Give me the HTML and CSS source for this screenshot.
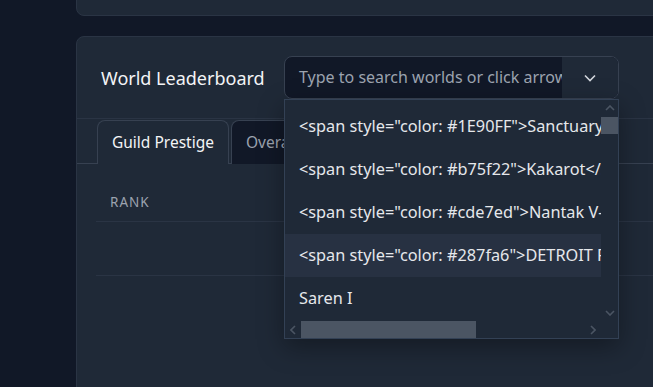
FILE: index.html
```html
<!DOCTYPE html>
<html lang="en">
  <head>
    <meta charset="UTF-8" />
    <meta name="viewport" content="width=device-width, initial-scale=1.0" />
    <title>World Leaderboard</title>
    <link rel="stylesheet" href="styles.css">
  </head>
  <body>
    <div class="page">
      <div class="card summary-card"></div>

      <div class="card board-card">
        <div class="board-header">
          <h2 class="board-title">World Leaderboard</h2>
          <div class="search">
            <div class="search-box">
              <span class="search-placeholder">Type to search worlds or click arrow</span>
              <span class="search-toggle">
                <svg width="12" height="8" viewBox="0 0 12 8">
                  <path d="M1 1.5 L6 6.5 L11 1.5" fill="none" stroke="#d1d5db" stroke-width="1.6" />
                </svg>
              </span>
            </div>
            <!-- Dropdown list with scrollbars -->
            <div class="dropdown">
              <div class="dropdown-list">
                <div class="option">&lt;span style="color: #1E90FF"&gt;Sanctuary&lt;/span&gt;</div>
                <div class="option">&lt;span style="color: #b75f22"&gt;Kakarot&lt;/span&gt;</div>
                <div class="option">&lt;span style="color: #cde7ed"&gt;Nantak V-II&lt;/span&gt;</div>
                <div class="option option-hover">&lt;span style="color: #287fa6"&gt;DETROIT RP&lt;/span&gt;</div>
                <div class="option">Saren I</div>
              </div>
              <div class="vscroll">
                <svg class="arrow arrow-up" width="10" height="6" viewBox="0 0 10 6">
                  <path d="M1 5 L5 1 L9 5" fill="none" stroke="#4b5563" stroke-width="1.6" />
                </svg>
                <span class="vthumb"></span>
                <svg class="arrow arrow-down" width="10" height="6" viewBox="0 0 10 6">
                  <path d="M1 1 L5 5 L9 1" fill="none" stroke="#4b5563" stroke-width="1.6" />
                </svg>
              </div>
              <div class="hscroll">
                <svg class="arrow arrow-left" width="6" height="10" viewBox="0 0 6 10">
                  <path d="M5 1 L1 5 L5 9" fill="none" stroke="#4b5563" stroke-width="1.6" />
                </svg>
                <span class="hthumb"></span>
                <svg class="arrow arrow-right" width="6" height="10" viewBox="0 0 6 10">
                  <path d="M1 1 L5 5 L1 9" fill="none" stroke="#4b5563" stroke-width="1.6" />
                </svg>
              </div>
              <div class="scroll-corner"></div>
            </div>
          </div>
        </div>

        <div class="tabs">
          <div class="tab tab-active">Guild Prestige</div>
          <div class="tab">Overall Prestige</div>
        </div>

        <table class="board-table">
          <thead>
            <tr><th class="col-rank">Rank</th><th>Guild</th><th>Prestige</th></tr>
          </thead>
          <tbody>
            <tr><td></td><td></td><td></td></tr>
          </tbody>
        </table>
      </div>
    </div>
  </body>
</html>
```

FILE: styles.css
```css
* {
  box-sizing: border-box;
}
body {
  margin: 0;
  height: 387px;
  overflow: hidden;
  background-color: #111827;
  color: #e5e7eb;
  font-family: "Noto Sans", "Open Sans", sans-serif;
}
.page {
  display: flex;
  flex-direction: column;
  gap: 20px;
  padding-left: 76px;
  margin-top: -40px;
  width: 720px;
}
.card {
  background-color: #1f2937;
  border: 1px solid #2a3444;
  border-radius: 8px;
}
.summary-card {
  height: 56px;
}
.board-card {
  height: 420px;
}
.board-header {
  display: flex;
  align-items: center;
  padding: 19px 24px 19px 24px;
  border-bottom: 1px solid #2a3444;
}
.board-title {
  width: 183px;
  margin: 0;
  font-size: 18px;
  font-weight: 400;
  color: #f3f4f6;
}
.search {
  position: relative;
  width: 335px;
}
.search-box {
  display: flex;
  height: 43px;
  background-color: #111827;
  border: 1px solid #374151;
  border-radius: 8px;
  overflow: hidden;
}
.search-placeholder {
  flex: 1;
  padding-left: 14px;
  line-height: 41px;
  font-size: 16px;
  color: #9ca3af;
  white-space: nowrap;
  overflow: hidden;
}
.search-toggle {
  display: flex;
  flex: none;
  align-items: center;
  justify-content: center;
  width: 56px;
  background-color: #1f2937;
}
.dropdown {
  position: absolute;
  top: 43px;
  left: 0;
  z-index: 10;
  display: grid;
  grid-template-columns: 1fr 17px;
  grid-template-rows: 221px 17px;
  width: 335px;
  height: 240px;
  background-color: #1f2937;
  border: 1px solid #334155;
  box-shadow: 0 8px 24px rgba(0, 0, 0, 0.35);
}
.dropdown-list {
  padding-top: 5px;
  overflow: hidden;
  white-space: nowrap;
}
.option {
  height: 43px;
  padding-left: 14px;
  line-height: 43px;
  font-size: 16.3px;
  color: #e5e7eb;
}
.option-hover {
  background-color: #273142;
}
.vscroll,
.hscroll {
  position: relative;
  display: flex;
}
.vscroll {
  flex-direction: column;
  align-items: center;
  padding-top: 17px;
}
.hscroll {
  align-items: center;
  padding-left: 16px;
}
.vthumb {
  width: 17px;
  height: 17px;
  background-color: #4b5563;
}
.hthumb {
  width: 175px;
  height: 17px;
  background-color: #4b5563;
}
.scroll-corner {
  background-color: #1f2937;
}
.arrow {
  position: absolute;
}
.arrow-up {
  top: 5px;
  left: 4px;
}
.arrow-down {
  bottom: 5px;
  left: 4px;
}
.arrow-left {
  left: 5px;
  top: 4px;
}
.arrow-right {
  right: 5px;
  top: 4px;
}
.tabs {
  display: flex;
  gap: 2px;
  padding: 1px 0 0 20px;
  border-bottom: 1px solid #374151;
}
.tab {
  height: 44px;
  margin-bottom: -1px;
  padding: 0 14px;
  line-height: 43px;
  font-size: 15.5px;
  color: #9ca3af;
  background-color: #111827;
  border: 1px solid #374151;
  border-bottom: none;
  border-radius: 8px 8px 0 0;
}
.tab-active {
  color: #f3f4f6;
  background-color: #1f2937;
}
.board-table {
  width: 560px;
  margin: 20px 0 0 19px;
  border-collapse: collapse;
}
.board-table th {
  height: 37px;
  padding: 0 14px;
  text-align: left;
  font-size: 13.5px;
  font-weight: 400;
  letter-spacing: 1px;
  text-transform: uppercase;
  color: #9ca3af;
  border-bottom: 1px solid #2a3444;
}
.board-table .col-rank {
  width: 240px;
}
.board-table td {
  height: 54px;
  border-bottom: 1px solid #2a3444;
}
```
